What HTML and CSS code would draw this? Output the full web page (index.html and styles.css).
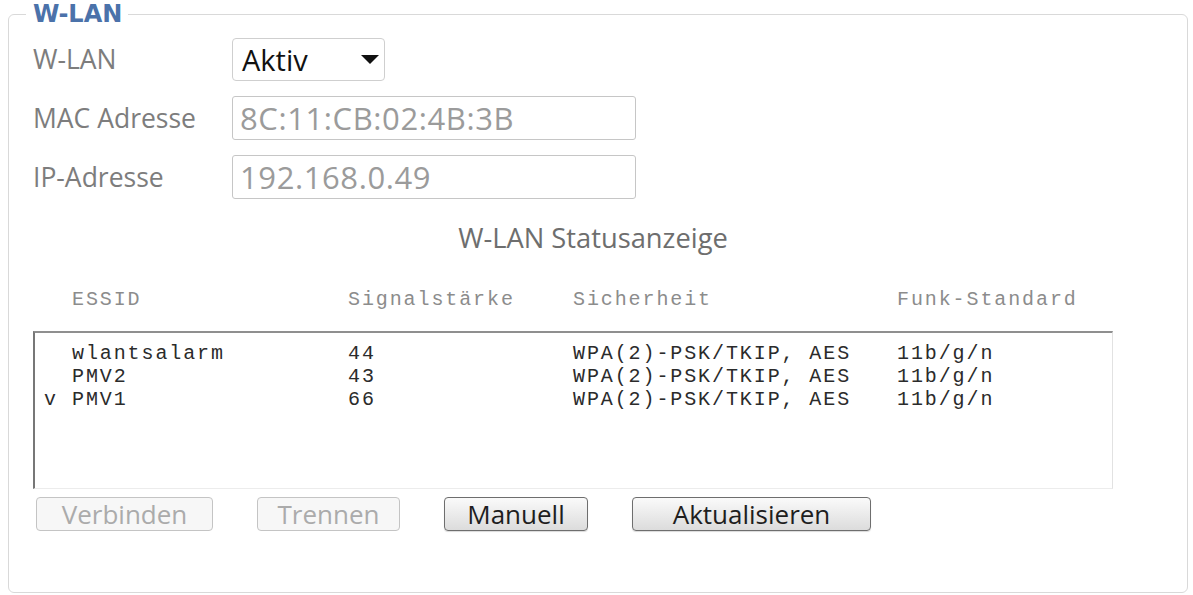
FILE: index.html
```html
<!DOCTYPE html>
<html lang="de">
<head>
<meta charset="utf-8">
<title>W-LAN</title>
<link rel="stylesheet" href="styles.css">
</head>
<body>
<fieldset class="panel">
  <legend class="panel-title">W-LAN</legend>
  <div class="panel-body">
    <div class="form">
      <div class="form-row">
        <span class="label">W-LAN</span>
        <div class="select">
          <span>Aktiv</span>
          <svg class="caret" width="18" height="9" viewBox="0 0 18 9"><path d="M0 0 H18 L9 9 Z" fill="#111"/></svg>
        </div>
      </div>
      <div class="form-row">
        <span class="label">MAC Adresse</span>
        <div class="input">8C:11:CB:02:4B:3B</div>
      </div>
      <div class="form-row">
        <span class="label">IP-Adresse</span>
        <div class="input">192.168.0.49</div>
      </div>
    </div>

    <div class="status-title">W-LAN Statusanzeige</div>

    <div class="list-head">
      <span></span><span>ESSID</span><span>Signalstärke</span><span>Sicherheit</span><span>Funk-Standard</span>
    </div>
    <div class="list">
      <div class="row"><span></span><span>wlantsalarm</span><span>44</span><span>WPA(2)-PSK/TKIP, AES</span><span>11b/g/n</span></div>
      <div class="row"><span></span><span>PMV2</span><span>43</span><span>WPA(2)-PSK/TKIP, AES</span><span>11b/g/n</span></div>
      <div class="row"><span>v</span><span>PMV1</span><span>66</span><span>WPA(2)-PSK/TKIP, AES</span><span>11b/g/n</span></div>
    </div>

    <div class="buttons">
      <button class="btn btn-disabled btn-verbinden" disabled>Verbinden</button>
      <button class="btn btn-disabled btn-trennen" disabled>Trennen</button>
      <button class="btn btn-manuell">Manuell</button>
      <button class="btn btn-aktualisieren">Aktualisieren</button>
    </div>
  </div>
</fieldset>
</body>
</html>
```

FILE: styles.css
```css
* { box-sizing: border-box; }

body {
  margin: 0;
  background: #ffffff;
  font-family: "Open Sans", "Noto Sans", sans-serif;
}

.panel {
  margin: 2px 0 0 8px;
  width: 1180px;
  min-width: 0;
  border: 1px solid #d9d9d9;
  border-radius: 6px;
  padding: 11px 0 61px 17px;
}

.panel-title {
  padding: 0 6px 0 7px;
  font: bold 24px/24px "DejaVu Sans", sans-serif;
  color: #4b72aa;
}

.panel-body {
  padding-left: 7px;
}

.form {
  display: flex;
  flex-direction: column;
  gap: 15px;
}

.form-row {
  display: flex;
  align-items: center;
  height: 44px;
}

.label {
  width: 199px;
  font-size: 26.5px;
  color: #7d7d7d;
}

.select {
  width: 153px;
  height: 43px;
  border: 1px solid #cfcfcf;
  border-radius: 4px;
  display: flex;
  align-items: center;
  justify-content: space-between;
  padding: 0 5px 0 9px;
  font-size: 29px;
  color: #111;
}

.input {
  width: 404px;
  height: 44px;
  border: 1px solid #c6c6c6;
  border-radius: 3px;
  padding-left: 7px;
  display: flex;
  align-items: center;
  font-size: 31px;
  letter-spacing: 0.6px;
  color: #9b9b9b;
}

.status-title {
  margin-top: 24px;
  width: 1120px;
  text-align: center;
  font-size: 27.3px;
  line-height: 30px;
  color: #6e6e6e;
}

.list-head {
  margin-top: 33px;
  display: grid;
  grid-template-columns: 28px 276px 225px 324px auto;
  padding-left: 11px;
  font: 20px/28px "Liberation Mono", monospace;
  letter-spacing: 1.9px;
  color: #8c8c8c;
}

.list {
  margin-top: 17px;
  width: 1080px;
  height: 158px;
  border-top: 2px solid #8f8f8f;
  border-left: 2px solid #777777;
  border-right: 1px solid #e2e2e2;
  border-bottom: 1px solid #ececec;
  padding: 9px 0 0 9px;
}

.row {
  display: grid;
  grid-template-columns: 28px 276px 225px 324px auto;
  font: 20px/23px "Liberation Mono", monospace;
  letter-spacing: 1.9px;
  color: #2b2b2b;
  white-space: pre;
}

.buttons {
  margin-top: 8px;
  display: flex;
  gap: 44px;
  padding-left: 3px;
}

.btn {
  height: 34px;
  padding: 0;
  font-family: "Open Sans", "Noto Sans", sans-serif;
  font-size: 26px;
  line-height: 1;
  border-radius: 4px;
}

.btn-disabled {
  border: 1px solid #c4c4c4;
  background: #f7f7f7;
  color: #ababab;
}

.btn-manuell,
.btn-aktualisieren {
  border: 1px solid #6e6e6e;
  background: linear-gradient(#fafafa, #dcdcdc);
  color: #1e1e1e;
  box-shadow: 0 1px 1px rgba(0, 0, 0, 0.15);
}

.btn-verbinden { width: 177px; }
.btn-trennen { width: 143px; }
.btn-manuell { width: 144px; }
.btn-aktualisieren { width: 239px; }
```
